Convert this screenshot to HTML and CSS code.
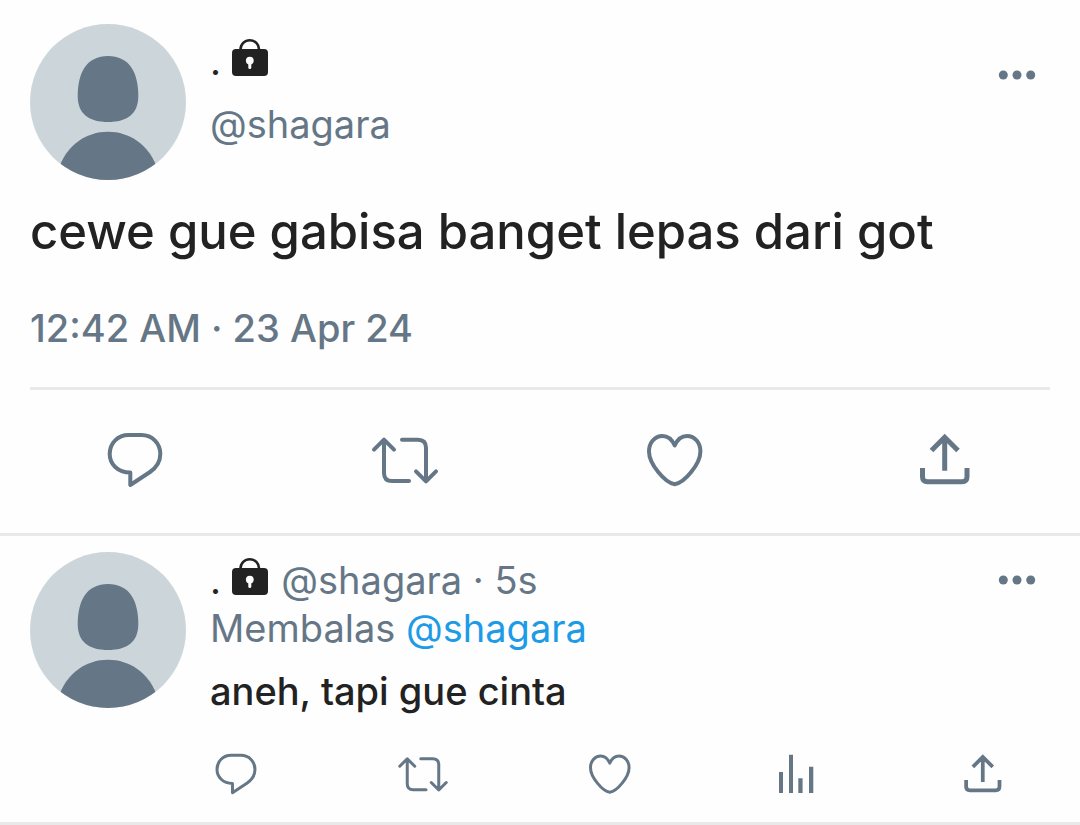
FILE: index.html
```html
<!DOCTYPE html>
<html lang="id">
<head>
<meta charset="utf-8">
<meta name="viewport" content="width=device-width, initial-scale=1">
<title>Tweet</title>
<link rel="stylesheet" href="styles.css">
</head>
<body>
<svg class="sprite" aria-hidden="true">
  <symbol id="avatar" viewBox="0 0 156 156">
    <path d="M78 32C99 32 108.300 48 108.300 72C108.300 90 97 98 78 98C59 98 47.700 90 47.700 72C47.700 48 57 32 78 32Z"/>
    <path d="M30 141C38 121 56 107.700 78 107.700C100 107.700 118 121 126 141V156H30Z"/>
  </symbol>
  <symbol id="lock" viewBox="0 0 36 38">
    <path d="M8.500 12V11.500a9.300 9.300 0 0 1 18.600 0V12" fill="none" stroke="currentColor" stroke-width="2.600"/>
    <rect y="11" width="36" height="27" rx="4" fill="currentColor"/>
    <circle cx="17.800" cy="22.600" r="3.900" fill="#fefefe"/>
    <path d="M17.800 24V29.500" stroke="#fefefe" stroke-width="3" stroke-linecap="round"/>
  </symbol>
  <symbol id="more" viewBox="0 0 66 42">
    <circle cx="19.300" cy="21" r="4.500"/><circle cx="33" cy="21" r="4.500"/><circle cx="46.700" cy="21" r="4.500"/>
  </symbol>
  <symbol id="comment" viewBox="0 0 72 72">
    <path d="M31.300 48.500C18.500 48.500 10.700 40 10.700 30C10.700 19 19 11 29.500 11H42.500C53.500 11 61.300 19.500 61.300 30C61.300 37.500 57.500 43.500 51 48L31.300 61Z" class="line"/>
  </symbol>
  <symbol id="retweet" viewBox="0 0 72 72">
    <path d="M5 25.700L15 15.700L25 25.700M15 16V49Q15 57 23 57H40M33 15.700H49Q57 15.700 57 23.700V57M47 47.300L57 57.300L67 47.300" class="line"/>
  </symbol>
  <symbol id="heart" viewBox="0 0 72 72">
    <path d="M35.700 21.500C33 15.500 28.500 12 23.500 12C15.500 12 10 19 10 27.500C10 40 26 59 35.700 60.300C45.400 59 61.400 40 61.400 27.500C61.400 19 56 12 48 12C43 12 38.400 15.500 35.700 21.500Z" class="line"/>
  </symbol>
  <symbol id="share" viewBox="0 0 72 72">
    <path d="M22.500 26.500L35.700 13.300L49 26.500M35.700 14V46.700M13.500 44V52.700Q13.500 57.700 18.500 57.700H53Q58 57.700 58 52.700V44" class="line square"/>
  </symbol>
  <symbol id="stats" viewBox="0 0 54 54">
    <path d="M10 25h4v21h-4zM20 7.700h4V46h-4zM29.300 31.300h4.300V46h-4.300zM40 19.700h4.300V46H40z"/>
  </symbol>
</svg>
<main>
  <article class="tweet">
    <header class="tweet-head">
      <svg class="avatar" role="img" aria-label="Avatar"><use href="#avatar"/></svg>
      <div class="author">
        <p class="name">. <svg class="lock"><use href="#lock"/></svg></p>
        <p class="muted">@shagara</p>
      </div>
      <button class="more" type="button" aria-label="More"><svg><use href="#more"/></svg></button>
    </header>
    <p class="tweet-text">cewe gue gabisa banget lepas dari got</p>
    <p class="time muted">12:42 AM · 23 Apr 24</p>
  </article>
  <div class="actions">
    <button type="button" aria-label="Reply"><svg><use href="#comment"/></svg></button>
    <button type="button" aria-label="Retweet"><svg><use href="#retweet"/></svg></button>
    <button type="button" aria-label="Like"><svg><use href="#heart"/></svg></button>
    <button type="button" aria-label="Share"><svg><use href="#share"/></svg></button>
  </div>
  <article class="reply">
    <svg class="avatar" role="img" aria-label="Avatar"><use href="#avatar"/></svg>
    <div class="reply-body">
      <div class="reply-head">
        <p class="name">. <svg class="lock"><use href="#lock"/></svg> <span class="muted handle">@shagara · 5s</span></p>
        <button class="more" type="button" aria-label="More"><svg><use href="#more"/></svg></button>
      </div>
      <p class="muted">Membalas <a href="#">@shagara</a></p>
      <p class="reply-text">aneh, tapi gue cinta</p>
      <div class="reply-actions">
        <button type="button" aria-label="Reply"><svg><use href="#comment"/></svg></button>
        <button type="button" aria-label="Retweet"><svg><use href="#retweet"/></svg></button>
        <button type="button" aria-label="Like"><svg><use href="#heart"/></svg></button>
        <button type="button" aria-label="Statistics"><svg><use href="#stats"/></svg></button>
        <button type="button" aria-label="Share"><svg><use href="#share"/></svg></button>
      </div>
    </div>
  </article>
</main>
</body>
</html>
```
FILE: styles.css
```css
* { box-sizing: border-box; }
body {
  margin: 0;
  background: #fefefe;
  color: #222;
  font-family: Inter, Roboto, "Liberation Sans", sans-serif;
  font-size: 38px;
  line-height: 48px;
}
p { margin: 0; }
a { color: #1d9be6; text-decoration: none; }
button {
  display: flex;
  padding: 0;
  border: 0;
  background: none;
  color: #657786;
  cursor: pointer;
}
svg { display: block; fill: currentColor; }
.sprite { position: absolute; width: 0; height: 0; }
.line {
  fill: none;
  stroke: currentColor;
  stroke-width: 4;
  stroke-linecap: round;
  stroke-linejoin: round;
}
.square { stroke-width: 5; stroke-linecap: butt; stroke-linejoin: miter; }
.muted { color: #657786; }

.avatar {
  flex: none;
  width: 156px;
  height: 156px;
  border-radius: 50%;
  background: #ccd6da;
  color: #657786;
}
.lock { display: inline-block; width: 36px; height: 38px; vertical-align: -1px; }
.name { white-space: nowrap; }
.handle { margin-left: 3px; }
.more { margin-left: auto; }
.more svg { width: 66px; height: 42px; }

.tweet { margin: 0 30px; padding: 24px 0 35px; border-bottom: 3px solid #e9e9e9; }
.tweet-head { display: flex; align-items: flex-start; gap: 24px; }
.tweet-head .more { margin-top: 30px; }
.author { display: grid; gap: 15px; padding-top: 13px; }
.tweet-text { margin-top: 22px; font-size: 49px; font-weight: 500; line-height: 60px; }
.time { margin-top: 42px; font-weight: 500; }

.actions {
  display: grid;
  grid-template-columns: repeat(4, 1fr);
  justify-items: center;
  padding: 34px 0 37px;
  border-bottom: 3px solid #e9e9e9;
}
.actions svg { width: 72px; height: 72px; }

.reply {
  display: flex;
  align-items: flex-start;
  gap: 24px;
  padding: 16px 30px 21px;
  border-bottom: 3px solid #e9e9e9;
}
.reply-body { flex: 1; min-width: 0; padding-top: 4px; }
.reply-head { display: flex; align-items: center; height: 48px; }
.reply-text { margin-top: 15px; font-weight: 500; }
.reply-actions { display: flex; justify-content: space-between; margin: 32px 40px 0 -1px; }
.reply-actions svg { width: 54px; height: 54px; }
```
